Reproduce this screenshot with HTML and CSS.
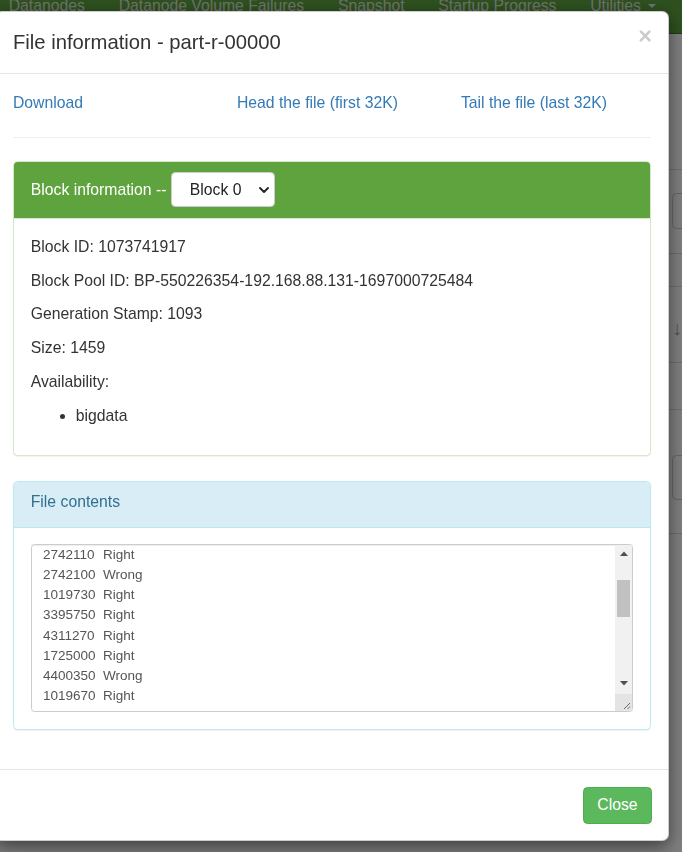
FILE: index.html
```html
<!DOCTYPE html>
<html lang="en">
<head>
<meta charset="utf-8">
<title>Browsing HDFS</title>
<link rel="stylesheet" href="styles.css">
</head>
<body>
<div class="page">
  <nav class="navbar">
    <ul class="nav">
      <li>Datanodes</li>
      <li>Datanode Volume Failures</li>
      <li>Snapshot</li>
      <li>Startup Progress</li>
      <li>Utilities <b class="caret"></b></li>
    </ul>
  </nav>
  <div class="bg-content">
    <div class="bg-sec bg-sec1"></div>
    <div class="bg-sec bg-sec2"><div class="bg-btn"></div></div>
    <div class="bg-sec bg-sec3"></div>
    <div class="bg-sec bg-sec4"><span class="bg-arrow">&#8595;</span></div>
    <div class="bg-sec bg-sec5"></div>
    <div class="bg-sec bg-sec6"><div class="bg-btn bg-btn-tall"></div></div>
  </div>
</div>
<div class="backdrop"></div>
<div class="modal" role="dialog">
  <div class="modal-header">
    <h4 class="modal-title">File information - part-r-00000</h4>
    <button class="close" type="button">&times;</button>
  </div>
  <div class="modal-body">
    <div class="links">
      <a href="#">Download</a>
      <a href="#">Head the file (first 32K)</a>
      <a href="#">Tail the file (last 32K)</a>
    </div>
    <hr class="divider">
    <div class="panel panel-success">
      <div class="panel-heading heading-flex">
        <span>Block information --</span>
        <span class="select">Block 0<svg class="chev" width="10" height="6" viewBox="0 0 10 6"><path d="M1 1 L5 5 L9 1" fill="none" stroke="#222" stroke-width="1.8" stroke-linecap="round" stroke-linejoin="round"/></svg></span>
      </div>
      <div class="panel-body">
        <p>Block ID: 1073741917</p>
        <p>Block Pool ID: BP-550226354-192.168.88.131-1697000725484</p>
        <p>Generation Stamp: 1093</p>
        <p>Size: 1459</p>
        <p>Availability:</p>
        <ul>
          <li>bigdata</li>
        </ul>
      </div>
    </div>
    <div class="panel panel-info">
      <div class="panel-heading info-heading">File contents</div>
      <div class="panel-body file-body">
        <div class="textarea">
          <div class="ta-text">2742110	Right
2742100	Wrong
1019730	Right
3395750	Right
4311270	Right
1725000	Right
4400350	Wrong
1019670	Right</div>
          <div class="scrollbar">
            <div class="sb-btn"><svg width="8" height="5" viewBox="0 0 8 5"><path d="M0 5 L4 0.5 L8 5 Z" fill="#505050"/></svg></div>
            <div class="sb-track"><div class="sb-thumb"></div></div>
            <div class="sb-btn sb-down"><svg width="8" height="5" viewBox="0 0 8 5"><path d="M0 0 L8 0 L4 4.5 Z" fill="#505050"/></svg></div>
            <div class="sb-corner"><svg width="17" height="17" viewBox="0 0 17 17"><path d="M15 9 L9 15 M15 12.5 L12.5 15" stroke="#6a6a6a" stroke-width="1" fill="none"/></svg></div>
          </div>
        </div>
      </div>
    </div>
  </div>
  <div class="modal-footer">
    <button class="btn btn-success" type="button">Close</button>
  </div>
</div>
</body>
</html>
```

FILE: styles.css
```css
* {
  box-sizing: border-box;
}

html, body {
  margin: 0;
  padding: 0;
  overflow: hidden;
}

body {
  font-family: "Liberation Sans", Arial, Helvetica, sans-serif;
  font-size: 15.75px;
  line-height: 22.5px;
  color: #333;
  background: #fff;
  width: 682px;
  height: 852px;
}

/* ---------- page behind the modal ---------- */
.navbar {
  margin-top: -22.25px;
  height: 56.25px;
  background: #5fa33e;
  border-bottom: 1px solid #3f7a25;
}

.nav {
  display: flex;
  list-style: none;
  margin: 0 0 0 -8.2px;
  padding: 0;
}

.nav li {
  padding: 16.875px;
  color: #dfe6da;
  white-space: nowrap;
}

.caret {
  display: inline-block;
  width: 0;
  height: 0;
  margin-left: 2.25px;
  vertical-align: middle;
  border-top: 4.5px solid #dfe6da;
  border-left: 4.5px solid transparent;
  border-right: 4.5px solid transparent;
}

.bg-sec {
  border-bottom: 1px solid #ddd;
}

.bg-sec1 { height: 136px; }
.bg-sec2 { height: 84px; padding-top: 23px; }
.bg-sec3 { height: 33px; }
.bg-sec4 { height: 76px; padding: 30px 0 0 672px; }
.bg-sec5 { height: 47px; }
.bg-sec6 { height: 124px; padding-top: 45px; }

.bg-btn {
  margin-left: 672px;
  width: 40px;
  height: 36px;
  border: 1px solid #ccc;
  border-radius: 4.5px;
}

.bg-btn-tall {
  height: 45px;
}

.bg-arrow {
  color: #aaa;
  font-size: 20px;
}

.backdrop {
  position: fixed;
  inset: 0;
  background: rgba(0, 0, 0, 0.5);
}

/* ---------- modal ---------- */
.modal {
  position: absolute;
  top: 11.25px;
  left: -5px;
  width: 674px;
  background: #fff;
  border: 1px solid rgba(0, 0, 0, 0.2);
  border-radius: 6.75px;
  box-shadow: 0 5.6px 16.9px rgba(0, 0, 0, 0.5);
}

.modal-header {
  display: flex;
  justify-content: space-between;
  align-items: flex-start;
  padding: 16px 16.875px 16px;
  border-bottom: 1px solid #e5e5e5;
}

.modal-title {
  margin: 0;
  font-size: 20.25px;
  line-height: 28.93px;
  font-weight: 500;
  color: #333;
}

.close {
  margin-top: -3px;
  margin-right: -1px;
  padding: 0;
  border: 0;
  background: transparent;
  font-family: "Liberation Sans", Arial, sans-serif;
  font-size: 23.625px;
  font-weight: 700;
  line-height: 1;
  color: #000;
  opacity: 0.2;
  text-shadow: 0 1px 0 #fff;
}

.modal-body {
  padding: 17.5px 16.875px 16.875px;
}

.links {
  display: grid;
  grid-template-columns: repeat(3, 1fr);
  margin-right: -33.75px;
}

.links a {
  color: #337ab7;
  text-decoration: none;
}

.divider {
  margin: 22.8px 0 23px;
  border: 0;
  border-top: 1px solid #eee;
}

.panel {
  background: #fff;
  border: 1px solid transparent;
  border-radius: 4.5px;
  box-shadow: 0 1px 1px rgba(0, 0, 0, 0.05);
  margin-bottom: 22.5px;
}

.panel-heading {
  padding: 11.25px 16.875px;
  border-bottom: 1px solid transparent;
  border-top-left-radius: 3.5px;
  border-top-right-radius: 3.5px;
}

.panel-body {
  padding: 16.875px;
}

.panel-success {
  border-color: #d6e9c6;
  margin-bottom: 24.5px;
}

.panel-success > .panel-heading {
  color: #fff;
  background: #5fa33e;
  border-color: #d6e9c6;
}

.heading-flex {
  display: flex;
  align-items: center;
  gap: 4.4px;
  padding-top: 10.5px;
  padding-bottom: 10.5px;
}

.select {
  display: inline-flex;
  align-items: center;
  justify-content: space-between;
  width: 104px;
  height: 35px;
  padding: 0 5px 0 18px;
  background: #fff;
  border: 1px solid #ccc;
  border-radius: 4.5px;
  color: #222;
}

.chev {
  display: block;
  margin-top: 1px;
}

.panel-body p {
  margin: 0 0 11.25px;
}

.panel-body ul {
  margin: 0 0 11.25px;
  padding-left: 45px;
}

.panel-info {
  border-color: #bce8f1;
}

.panel-info > .panel-heading {
  color: #31708f;
  background: #d9edf7;
  border-color: #bce8f1;
}

.info-heading {
  padding-top: 9.5px;
  padding-bottom: 13px;
}

.file-body {
  padding-top: 16px;
}

.textarea {
  display: flex;
  height: 168px;
  background: #fff;
  border: 1px solid #ccc;
  border-radius: 3.4px;
  box-shadow: inset 0 1px 1px rgba(0, 0, 0, 0.075);
  overflow: hidden;
}

.ta-text {
  flex: 1;
  padding: 0 11.25px;
  font-size: 13.5px;
  line-height: 20.25px;
  color: #555;
  white-space: pre;
  tab-size: 8;
  overflow: hidden;
}

.scrollbar {
  width: 17px;
  display: flex;
  flex-direction: column;
  background: #f1f1f1;
}

.sb-btn {
  height: 17px;
  display: flex;
  align-items: center;
  justify-content: center;
}

.sb-down {
  align-items: flex-start;
  padding-top: 4px;
}

.sb-track {
  flex: 1;
  padding-top: 18.3px;
}

.sb-thumb {
  height: 36.7px;
  margin: 0 2px;
  background: #c1c1c1;
}

.sb-corner {
  height: 17px;
  background: #e4e4e4;
}

.sb-corner svg {
  display: block;
}

.modal-footer {
  padding: 16.875px 16.875px 16px;
  text-align: right;
  border-top: 1px solid #e5e5e5;
}

.btn {
  display: inline-block;
  margin-right: -1px;
  padding: 6.4px 13.5px;
  font-family: "Liberation Sans", Arial, sans-serif;
  font-size: 15.75px;
  line-height: 22.5px;
  border: 1px solid transparent;
  border-radius: 4.5px;
}

.btn-success {
  color: #fff;
  background: #5cb85c;
  border-color: #4cae4c;
}
```
